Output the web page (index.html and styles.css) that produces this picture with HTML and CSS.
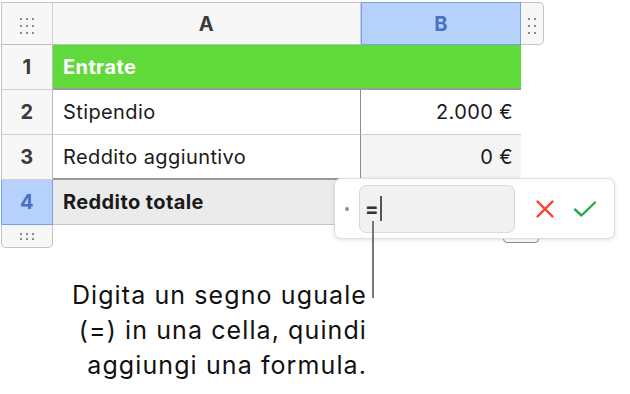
FILE: index.html
```html
<!DOCTYPE html>
<html lang="it">
<head>
  <meta charset="UTF-8">
  <meta name="viewport" content="width=device-width, initial-scale=1.0">
  <title>Formula</title>
  <link rel="stylesheet" href="styles.css">
</head>
<body>
  <div class="page">
    <div class="sheet">
      <div class="row head">
        <div class="cell corner">
          <svg width="16" height="18" viewBox="0 0 16 18"><g fill="#8a8a8a"><rect x="1" y="2" width="2" height="2"/><rect x="7" y="2" width="2" height="2"/><rect x="13" y="2" width="2" height="2"/><rect x="1" y="9" width="2" height="2"/><rect x="7" y="9" width="2" height="2"/><rect x="13" y="9" width="2" height="2"/><rect x="1" y="16" width="2" height="2"/><rect x="7" y="16" width="2" height="2"/><rect x="13" y="16" width="2" height="2"/></g></svg>
        </div>
        <div class="cell colhead">A</div>
        <div class="cell colhead sel">B</div>
        <div class="grip-right">
          <svg width="10" height="18" viewBox="0 0 10 18"><g fill="#8a8a8a"><rect x="1" y="2" width="2" height="2"/><rect x="7" y="2" width="2" height="2"/><rect x="1" y="9" width="2" height="2"/><rect x="7" y="9" width="2" height="2"/><rect x="1" y="16" width="2" height="2"/><rect x="7" y="16" width="2" height="2"/></g></svg>
        </div>
      </div>
      <div class="row r1">
        <div class="cell rowhead">1</div>
        <div class="cell title">Entrate</div>
      </div>
      <div class="row r2">
        <div class="cell rowhead">2</div>
        <div class="cell label">Stipendio</div>
        <div class="cell value">2.000 €</div>
      </div>
      <div class="row r3">
        <div class="cell rowhead">3</div>
        <div class="cell label">Reddito aggiuntivo</div>
        <div class="cell value shade">0 €</div>
      </div>
      <div class="row r4">
        <div class="cell rowhead sel">4</div>
        <div class="cell label total">Reddito totale</div>
        <div class="cell value total"></div>
      </div>
      <div class="grip-bottom">
        <svg width="16" height="8" viewBox="0 0 16 8"><g fill="#8a8a8a"><rect x="1" y="1" width="2" height="2"/><rect x="7" y="1" width="2" height="2"/><rect x="13" y="1" width="2" height="2"/><rect x="1" y="6" width="2" height="2"/><rect x="7" y="6" width="2" height="2"/><rect x="13" y="6" width="2" height="2"/></g></svg>
      </div>
    </div>

    <div class="tab-behind"></div>
    <div class="editor">
      <span class="bullet"></span>
      <div class="field"><span class="eq">=</span><span class="caret"></span></div>
      <svg class="btn" width="20" height="20" viewBox="0 0 20 20"><path d="M2.5 2.5 L17.5 17.5 M17.5 2.5 L2.5 17.5" stroke="#ff3b2f" stroke-width="2.4" stroke-linecap="round" fill="none"/></svg>
      <svg class="btn" width="24" height="20" viewBox="0 0 24 20"><path d="M2 10.5 L8.5 16.5 L22 3.5" stroke="#2aa748" stroke-width="2.4" stroke-linecap="round" stroke-linejoin="round" fill="none"/></svg>
    </div>
    <div class="callout"></div>

    <p class="note">Digita un segno uguale<br>(=) in una cella, quindi<br>aggiungi una formula.</p>
  </div>
</body>
</html>
```

FILE: styles.css
```css
body {
  margin: 0;
  background: #fff;
  font-family: Inter, "Liberation Sans", Arial, sans-serif;
  color: #1a1a1a;
}
.page {
  position: relative;
  width: 630px;
  height: 394px;
  overflow: hidden;
}
.sheet {
  padding: 2px 0 0 1px;
}
.row {
  display: grid;
  grid-template-columns: 52px 308px 160px 23px;
  height: 45px;
}
.row.head {
  height: 43px;
}
.cell {
  box-sizing: border-box;
  display: flex;
  align-items: center;
  font-size: 20px;
  letter-spacing: 0.4px;
  border-right: 1px solid #cfcfcf;
  border-bottom: 1px solid #cfcfcf;
}
.head .cell {
  background: #f7f7f7;
  border-top: 1px solid #c4c4c4;
  border-bottom-color: #bdbdbd;
  justify-content: center;
  font-weight: bold;
  color: #3a3a3a;
}
.head .corner {
  border-left: 1px solid #c4c4c4;
  padding-top: 2px;
}
.head .colhead.sel {
  background: #b7d1fd;
  border: 1px solid #7e9de2;
  color: #4a70c2;
}
.grip-right {
  box-sizing: border-box;
  background: #f7f7f7;
  border: 1px solid #c4c4c4;
  border-left: none;
  border-radius: 0 5px 5px 0;
  display: flex;
  align-items: center;
  justify-content: center;
  padding-top: 2px;
}
.rowhead {
  justify-content: center;
  background: #f7f7f7;
  border-left: 1px solid #c4c4c4;
  border-right-color: #bdbdbd;
  font-weight: bold;
  color: #3a3a3a;
}
.rowhead.sel {
  background: #b7d1fd;
  border: 1px solid #7e9de2;
  color: #4a70c2;
}
.title {
  grid-column: 2 / 4;
  background: #5fda3a;
  color: #fff;
  font-weight: bold;
  padding-left: 10px;
  border-right: none;
  border-bottom: 2px solid #9a9a9a;
}
.label {
  padding-left: 10px;
  border-right: 1px solid #8c8c8c;
}
.value {
  justify-content: flex-end;
  padding-right: 8px;
  border-right: none;
}
.shade {
  background: #f4f4f4;
}
.r3 .cell {
  border-bottom: 2px solid #9a9a9a;
}
.r3 .rowhead {
  border-bottom: 1px solid #cfcfcf;
}
.total {
  background: #ebebeb;
  font-weight: bold;
  border-bottom-color: #c4c4c4;
}
.r4 .rowhead {
  border-top: none;
}
.grip-bottom {
  box-sizing: border-box;
  width: 52px;
  height: 23px;
  background: #f7f7f7;
  border: 1px solid #c4c4c4;
  border-top: none;
  border-radius: 0 0 5px 5px;
  display: flex;
  justify-content: center;
  align-items: center;
}

/* formula editor popover */
.tab-behind {
  position: absolute;
  left: 503px;
  top: 220px;
  width: 36px;
  height: 23px;
  box-sizing: border-box;
  border: 1px solid #8c8c8c;
  border-radius: 0 0 4px 4px;
  background: #fff;
}
.editor {
  position: absolute;
  left: 334px;
  top: 178px;
  width: 281px;
  height: 61px;
  box-sizing: border-box;
  background: #fff;
  border: 1px solid #dedede;
  border-radius: 7px;
  box-shadow: 0 1px 4px rgba(0, 0, 0, 0.12);
  display: flex;
  align-items: center;
  padding-left: 10px;
}
.bullet {
  width: 4px;
  height: 4px;
  border-radius: 50%;
  background: #8e8e8e;
  margin-right: 10px;
}
.field {
  box-sizing: border-box;
  width: 156px;
  height: 48px;
  background: #f1f1f1;
  border: 1px solid #dadada;
  border-radius: 7px;
  display: flex;
  align-items: center;
  padding-left: 5px;
}
.eq {
  font-size: 20px;
  font-weight: bold;
  color: #333;
}
.caret {
  width: 2px;
  height: 25px;
  background: #555;
  margin-left: 1px;
}
.btn {
  margin-left: 20px;
}
.btn + .btn {
  margin-left: 18px;
}
.callout {
  position: absolute;
  left: 372px;
  top: 221px;
  width: 2px;
  height: 77px;
  background: #777;
}
.note {
  width: 367px;
  margin: 30px 0 0;
  text-align: right;
  font-size: 25px;
  letter-spacing: 1.1px;
  line-height: 35px;
  color: #111;
}
```
